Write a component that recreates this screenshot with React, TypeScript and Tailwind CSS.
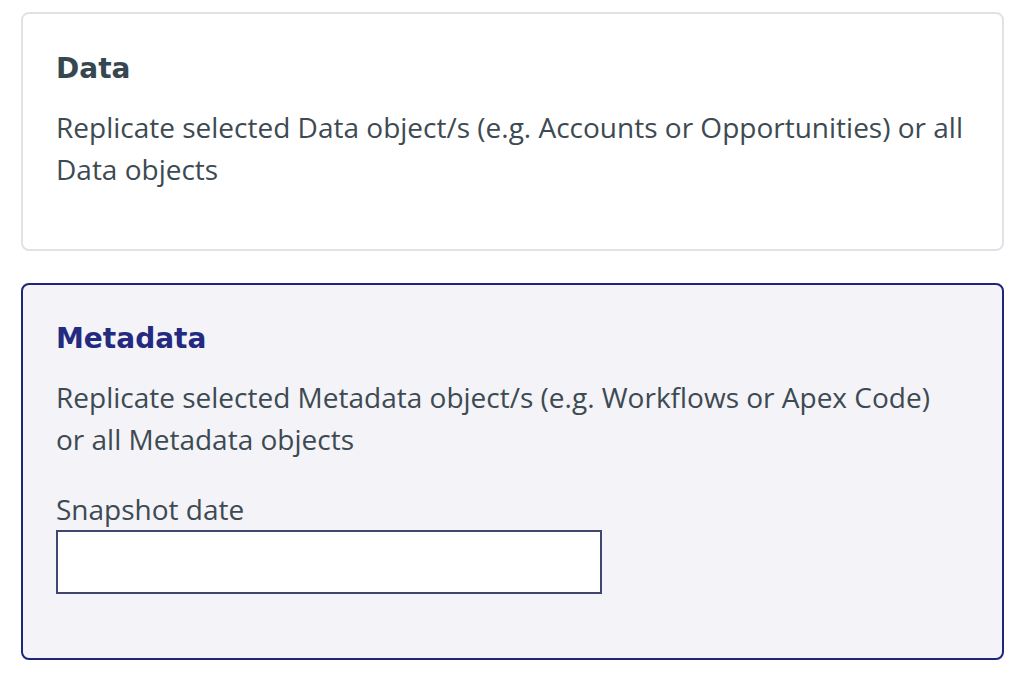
export default function App() {
  return (
    <div className="min-h-screen bg-white pl-[21px] pr-[26px] pt-[12px] font-['Open_Sans',sans-serif]">
      <div className="flex flex-col gap-[32px]">
        <div className="rounded-[8px] border-2 border-[#dfe3e8] bg-white pl-[33px] pr-[24px] pt-[37px] pb-[59px]">
          <h2 className="font-['DejaVu_Sans',sans-serif] text-[28px] font-bold leading-[36px] text-[#37474f]">Data</h2>
          <p className="mt-[19px] text-[28px] leading-[42px] text-[#3d4a52]">
            Replicate selected Data object/s (e.g. Accounts or Opportunities) or all Data objects
          </p>
        </div>

        <div className="rounded-[8px] border-2 border-[#1f2578] bg-[#f3f3f8] pl-[33px] pr-[24px] pt-[36px] pb-[64px]">
          <h2 className="font-['DejaVu_Sans',sans-serif] text-[28px] font-bold leading-[36px] text-[#232a80]">Metadata</h2>
          <p className="mt-[19px] max-w-[890px] text-[28px] leading-[42px] text-[#3d4a52]">
            Replicate selected Metadata object/s (e.g. Workflows or Apex Code) or all Metadata objects
          </p>
          <label className="mt-[28px] block text-[28px] leading-[42px] text-[#3d4a52]">Snapshot date</label>
          <input
            type="text"
            className="block h-[64px] w-[546px] border-2 border-[#41466f] bg-white px-3 text-[25px] outline-none"
          />
        </div>
      </div>
    </div>
  );
}
